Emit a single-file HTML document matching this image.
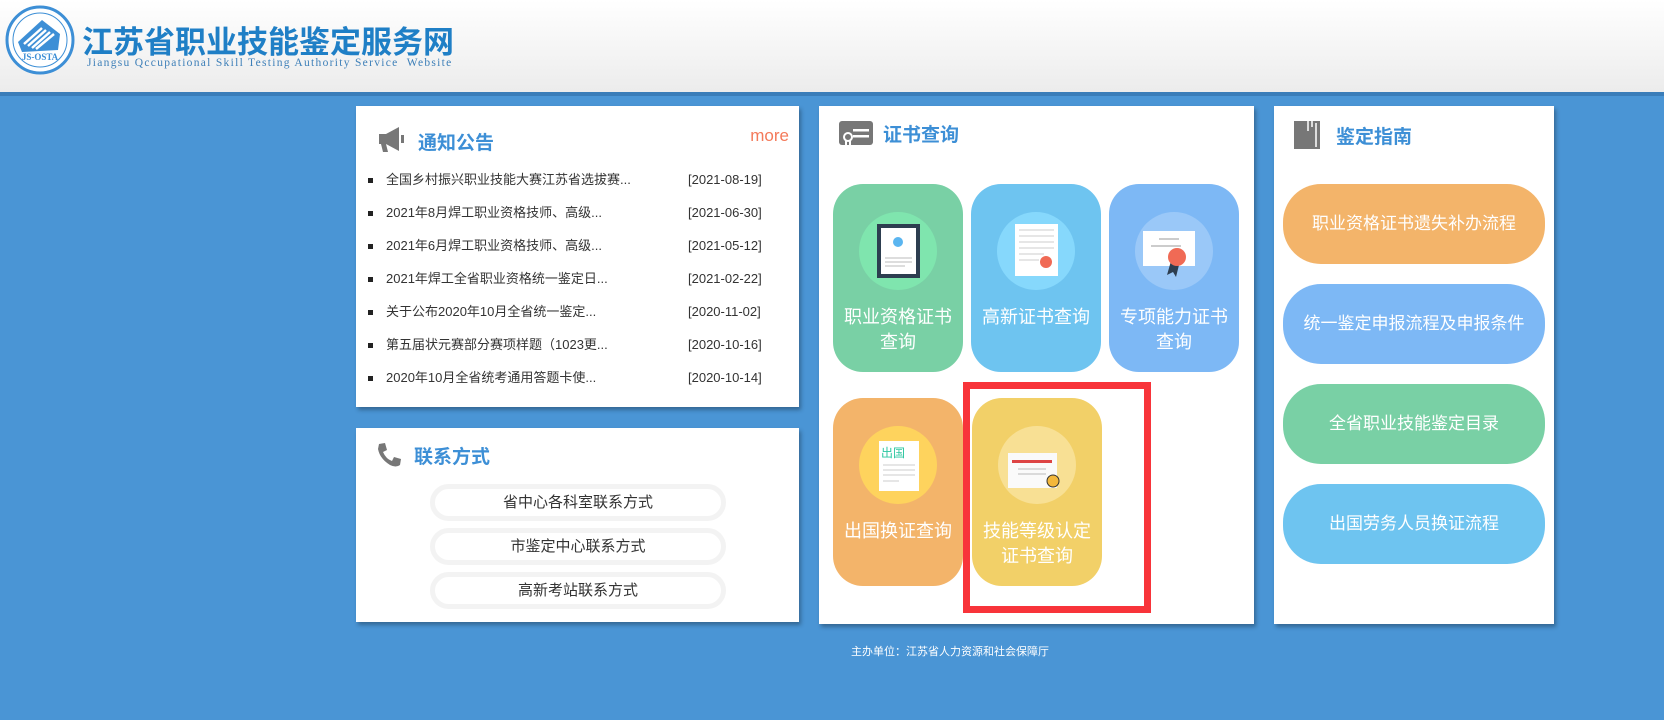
<!DOCTYPE html>
<html><head><meta charset="utf-8"><style>
*{margin:0;padding:0;box-sizing:border-box}
body{width:1664px;height:720px;background:#4a95d5;font-family:"Liberation Sans","Noto Sans CJK SC",sans-serif;position:relative;overflow:hidden}
.hdr{position:absolute;left:0;top:0;width:1664px;height:96px;background:linear-gradient(#fff,#ececec);border-bottom:4px solid #3a7db9}
.panel{position:absolute;background:#fff;box-shadow:2px 3px 4px rgba(0,0,0,.3)}
.ttl{position:absolute;font-size:19px;font-weight:bold;color:#3d8fd6}
.li{position:absolute;left:12px;font-size:13px;color:#333;width:420px;height:20px;line-height:20px}
.li:before{content:"";position:absolute;left:0;top:8px;width:5px;height:5px;background:#222}
.li span{position:absolute;left:18px;top:0;white-space:nowrap;height:20px;line-height:20px}
.li b{position:absolute;left:320px;top:0;font-weight:normal;height:20px;line-height:20px;font-family:"Liberation Sans","Noto Sans CJK SC",sans-serif}
.cb{position:absolute;left:74px;width:296px;height:37px;border:5px solid #f3f3f3;border-radius:20px;text-align:center;font-size:15px;line-height:27px;color:#333}
.tile{position:absolute;width:130px;height:188px;border-radius:30px;color:#fff;font-size:18px;text-align:center;line-height:25px}
.tile .c{position:absolute;left:26px;top:28px;width:78px;height:78px;border-radius:50%}
.tile .t{position:absolute;left:0;right:0;top:121px}
.gb{position:absolute;left:9px;width:262px;height:80px;border-radius:38px;color:#fff;font-size:17px;text-align:center;line-height:80px}
</style></head><body>
<div class="hdr">
<svg style="position:absolute;left:4px;top:4px" width="72" height="72" viewBox="0 0 72 72"><circle cx="36" cy="36" r="33" fill="#fff" stroke="#3d8fd6" stroke-width="3"/><circle cx="36" cy="36" r="27" fill="none" stroke="#3d8fd6" stroke-width="1"/><path d="M14 38 L38 16 L56 30 L54 46 L18 48Z" fill="#3d8fd6"/><path d="M20 40 L38 24 M24 42 L42 26 M28 44 L46 28 M32 45 L50 30" stroke="#fff" stroke-width="2.5"/><text x="36" y="56" font-size="9" font-weight="bold" fill="#3d8fd6" text-anchor="middle" font-family="Liberation Serif">JS-OSTA</text></svg>
<div style="position:absolute;left:82px;top:17px;font-size:31px;font-weight:bold;color:#1f7fc6">江苏省职业技能鉴定服务网</div>
<div style="position:absolute;left:87px;top:57px;font-size:11.5px;color:#3d7fb8;font-family:'Liberation Serif',serif;letter-spacing:1.3px">Jiangsu Qccupational Skill Testing Authority Service&nbsp; Website</div>
</div>

<div class="panel" style="left:356px;top:106px;width:443px;height:301px">
<svg style="position:absolute;left:21px;top:18px" width="28" height="30" viewBox="0 0 28 30"><path d="M2 10h7v10H2z M9 10 L22 3 V27 L9 20Z M24 11h3v8h-3z M4 20h5l2 8H6z" fill="#777"/></svg>
<div class="ttl" style="left:62px;top:22px">通知公告</div>
<div style="position:absolute;right:10px;top:20px;font-size:17px;color:#f47a5a">more</div>
<div class="li" style="top:64px"><span>全国乡村振兴职业技能大赛江苏省选拔赛...</span><b>[2021-08-19]</b></div>
<div class="li" style="top:97px"><span>2021年8月焊工职业资格技师、高级...</span><b>[2021-06-30]</b></div>
<div class="li" style="top:130px"><span>2021年6月焊工职业资格技师、高级...</span><b>[2021-05-12]</b></div>
<div class="li" style="top:163px"><span>2021年焊工全省职业资格统一鉴定日...</span><b>[2021-02-22]</b></div>
<div class="li" style="top:196px"><span>关于公布2020年10月全省统一鉴定...</span><b>[2020-11-02]</b></div>
<div class="li" style="top:229px"><span>第五届状元赛部分赛项样题（1023更...</span><b>[2020-10-16]</b></div>
<div class="li" style="top:262px"><span>2020年10月全省统考通用答题卡使...</span><b>[2020-10-14]</b></div>
</div>

<div class="panel" style="left:356px;top:428px;width:443px;height:194px">
<svg style="position:absolute;left:20px;top:14px" width="26" height="26" viewBox="0 0 26 26"><path d="M3 2 L9 1 L11 8 L7 10 Q10 17 16 19 L18 15 L25 17 L24 23 Q20 26 14 23 Q4 17 2 7Z" fill="#777"/></svg>
<div class="ttl" style="left:58px;top:14px">联系方式</div>
<div class="cb" style="top:56px">省中心各科室联系方式</div>
<div class="cb" style="top:100px">市鉴定中心联系方式</div>
<div class="cb" style="top:144px">高新考站联系方式</div>
</div>

<div class="panel" style="left:819px;top:106px;width:435px;height:518px">
<svg style="position:absolute;left:20px;top:15px" width="34" height="28" viewBox="0 0 34 28"><rect x="0" y="0" width="34" height="24" rx="3" fill="#777"/><rect x="14" y="8" width="16" height="2.5" fill="#fff"/><rect x="14" y="14" width="16" height="2.5" fill="#fff"/><circle cx="9" cy="16" r="4" fill="none" stroke="#fff" stroke-width="2"/><path d="M7 20v7M11 20v7" stroke="#fff" stroke-width="2"/></svg>
<div class="ttl" style="left:64px;top:14px">证书查询</div>
<div class="tile" style="left:14px;top:78px;background:#79d0a5"><div class="c" style="background:#7fe5ae"></div><svg style="position:absolute;left:44px;top:40px" width="43" height="54"><rect width="43" height="54" fill="#2d3e50"/><rect x="4" y="4" width="35" height="46" fill="#fff"/><circle cx="21" cy="18" r="5" fill="#5ab5f0"/><path d="M8 34h27M8 38h27M8 42h20" stroke="#bbb"/></svg><div class="t">职业资格证书<br>查询</div></div>
<div class="tile" style="left:152px;top:78px;background:#6ec4f0"><div class="c" style="background:#86d8fc"></div><svg style="position:absolute;left:44px;top:40px" width="43" height="52"><rect width="43" height="52" fill="#fff"/><path d="M4 6h35M4 12h35M4 18h35M4 24h35M4 30h25M4 36h20" stroke="#ccc"/><circle cx="31" cy="38" r="6" fill="#f06a55"/></svg><div class="t">高新证书查询</div></div>
<div class="tile" style="left:290px;top:78px;background:#7db8f5"><div class="c" style="background:#9ac8f8"></div><svg style="position:absolute;left:34px;top:47px" width="54" height="50"><rect width="52" height="35" fill="#fff"/><path d="M16 8h20M8 15h30" stroke="#ccc" stroke-width="2"/><path d="M28 30l-4 14 6-3 3 5 3-12z" fill="#2d3e50"/><circle cx="34" cy="26" r="9" fill="#f06a55"/></svg><div class="t">专项能力证书<br>查询</div></div>
<div class="tile" style="left:14px;top:292px;background:#f3b46a"><div class="c" style="background:#fed35d"></div><svg style="position:absolute;left:46px;top:43px" width="40" height="50"><rect width="40" height="50" fill="#fff"/><text x="2" y="16" font-size="12" fill="#2dc7a0" font-family="Noto Sans CJK SC">出国</text><path d="M4 24h32M4 29h32M4 34h32M4 40h16" stroke="#ccc"/></svg><div class="t">出国换证查询</div></div>
<div class="tile" style="left:153px;top:292px;background:#f2d068"><div class="c" style="background:#f8e094"></div><svg style="position:absolute;left:36px;top:55px" width="52" height="40"><rect width="49" height="35" fill="#fafafa"/><rect x="4" y="7" width="40" height="3" fill="#d44"/><path d="M10 16h28M10 21h28" stroke="#bbb"/><circle cx="45" cy="28" r="6" fill="#f3b73b" stroke="#333"/></svg><div class="t">技能等级认定<br>证书查询</div></div>
<div style="position:absolute;left:144px;top:276px;width:188px;height:231px;border:7px solid #f8343a"></div>
</div>

<div class="panel" style="left:1274px;top:106px;width:280px;height:518px">
<svg style="position:absolute;left:20px;top:15px" width="26" height="28"><rect width="26" height="28" fill="#777"/><path d="M14 0v10M18 0v6M22 2v24" stroke="#fff" stroke-width="1.5"/></svg>
<div class="ttl" style="left:62px;top:16px">鉴定指南</div>
<div class="gb" style="top:78px;background:#f3b46a">职业资格证书遗失补办流程</div>
<div class="gb" style="top:178px;background:#7db8f5">统一鉴定申报流程及申报条件</div>
<div class="gb" style="top:278px;background:#79d0a5">全省职业技能鉴定目录</div>
<div class="gb" style="top:378px;background:#6ec4f0">出国劳务人员换证流程</div>
</div>

<div style="position:absolute;left:0;width:1900px;top:643px;text-align:center;font-size:11px;color:#fff">主办单位：江苏省人力资源和社会保障厅</div>
</body></html>
